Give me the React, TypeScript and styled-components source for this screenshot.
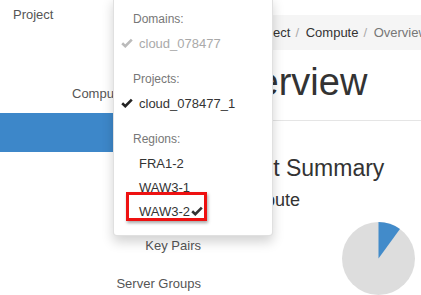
import * as React from 'react';
import styled, { createGlobalStyle } from 'styled-components';

const GlobalStyle = createGlobalStyle`
  html, body {
    margin: 0;
    padding: 0;
    background: #fff;
    overflow: hidden;
  }
  body {
    font-family: "Liberation Sans", Arial, Helvetica, sans-serif;
    color: #333;
  }
`;

const Page = styled.div`
  position: relative;
  display: flex;
  width: 421px;
  height: 295px;
  overflow: hidden;
`;

const Sidebar = styled.nav`
  flex: 0 0 220px;
  display: flex;
  flex-direction: column;
  font-size: 13px;
  color: #555;
`;

const SideTitle = styled.div`
  flex-shrink: 0;
  height: 30px;
  line-height: 30px;
  padding-left: 13px;
`;

const SideGroup = styled.div`
  flex-shrink: 0;
  height: 83px;
  display: flex;
  align-items: flex-end;
  padding: 0 0 12px 72px;
  box-sizing: border-box;
`;

const SideItem = styled.div<{ $active?: boolean }>`
  flex-shrink: 0;
  height: ${(p) => (p.$active ? 39 : 37.5)}px;
  display: flex;
  align-items: center;
  justify-content: flex-end;
  padding-right: 19px;
  background: ${(p) => (p.$active ? '#3d87c9' : 'transparent')};
  color: ${(p) => (p.$active ? '#fff' : '#555')};
`;

const Main = styled.main`
  flex: 1;
  min-width: 0;
  padding: 15px 0 0 15px;
`;

const Breadcrumb = styled.ol`
  margin: 0;
  list-style: none;
  height: 35px;
  display: flex;
  align-items: center;
  padding: 0 15px;
  background: #f5f5f5;
  font-size: 13px;
  white-space: nowrap;
`;

const Crumb = styled.li<{ $current?: boolean }>`
  color: ${(p) => (p.$current ? '#777' : '#333')};
  &:not(:first-child)::before {
    content: '/\\00a0';
    padding: 0 3px 0 5px;
    color: #aaa;
  }
`;

const Heading = styled.h1`
  margin: 7px 0 0 -26px;
  font-size: 38px;
  font-weight: 400;
  line-height: 50px;
  white-space: nowrap;
  padding-bottom: 13px;
  border-bottom: 1px solid #e5e5e5;
`;

const SubHeading = styled.h2`
  margin: 33px 0 0 -4px;
  font-size: 23px;
  font-weight: 400;
  line-height: 28px;
  white-space: nowrap;
`;

const GroupHeading = styled.h3`
  margin: 6px 0 0 -8px;
  font-size: 18px;
  font-weight: 400;
  line-height: 24px;
  white-space: nowrap;
`;

const ChartRow = styled.div`
  display: flex;
  justify-content: flex-end;
  padding: 10px 6px 0 0;
`;

const Menu = styled.div`
  position: absolute;
  left: 113px;
  top: -4px;
  width: 160px;
  padding: 10px 0 12px;
  box-sizing: border-box;
  background: #fff;
  border: 1px solid rgba(0, 0, 0, 0.12);
  border-radius: 4px;
  box-shadow: 0 6px 12px rgba(0, 0, 0, 0.175);
  font-size: 13px;
  z-index: 10;
`;

const MenuHeader = styled.div`
  height: 24px;
  line-height: 24px;
  padding-left: 19px;
  font-size: 12px;
  color: #777;
`;

const MenuItem = styled.div<{ $muted?: boolean }>`
  height: 24px;
  display: flex;
  align-items: center;
  padding-left: 7px;
  color: ${(p) => (p.$muted ? '#aaa' : '#333')};
  white-space: nowrap;
`;

const CheckSlot = styled.span`
  width: 13px;
  display: inline-flex;
  align-items: center;
  justify-content: flex-start;
  margin-right: 5px;
`;

const Divider = styled.div`
  height: 12px;
`;

const Highlight = styled.span`
  position: relative;
  display: inline-flex;
  align-items: center;
  gap: 1px;
  &::after {
    content: '';
    position: absolute;
    left: -13px;
    right: -4px;
    top: -12px;
    bottom: -2px;
    border: 3px solid #ee1111;
    box-shadow: 1px 2px 3px rgba(0, 0, 0, 0.35);
  }
`;

const Check = ({ color }: { color: string }) => (
  <svg width={12} height={10} viewBox="0 0 12 10">
    <path d="M1.2 5.2 L4.3 8.2 L10.8 1.6" stroke={color} strokeWidth={2.6} fill="none" strokeLinejoin="miter" />
  </svg>
);

const Pie = () => {
  const r = 36.5;
  const a = 0.1 * 2 * Math.PI;
  const x = r + r * Math.sin(a);
  const y = r - r * Math.cos(a);
  return (
    <svg width={73} height={73} viewBox="0 0 73 73">
      <circle cx={r} cy={r} r={r} fill="#dddddd" />
      <path d={`M${r} ${r} L${r} 0 A${r} ${r} 0 0 1 ${x} ${y} Z`} fill="#428bca" />
    </svg>
  );
};

const App: React.FC = () => {
  return (
    <>
      <GlobalStyle />
      <Page>
        <Sidebar>
          <SideTitle>Project</SideTitle>
          <SideGroup>Compute</SideGroup>
          <SideItem $active>Overview</SideItem>
          <SideItem>Instances</SideItem>
          <SideItem>Images</SideItem>
          <SideItem>Key Pairs</SideItem>
          <SideItem>Server Groups</SideItem>
        </Sidebar>
        <Main>
          <Breadcrumb>
            <Crumb>Project</Crumb>
            <Crumb>Compute</Crumb>
            <Crumb $current>Overview</Crumb>
          </Breadcrumb>
          <Heading>Overview</Heading>
          <SubHeading>Limit Summary</SubHeading>
          <GroupHeading>Compute</GroupHeading>
          <ChartRow>
            <Pie />
          </ChartRow>
        </Main>

        <Menu>
          <MenuHeader>Domains:</MenuHeader>
          <MenuItem $muted>
            <CheckSlot><Check color="#bbb" /></CheckSlot>
            cloud_078477
          </MenuItem>
          <Divider />
          <MenuHeader>Projects:</MenuHeader>
          <MenuItem>
            <CheckSlot><Check color="#222" /></CheckSlot>
            cloud_078477_1
          </MenuItem>
          <Divider />
          <MenuHeader>Regions:</MenuHeader>
          <MenuItem>
            <CheckSlot />
            FRA1-2
          </MenuItem>
          <MenuItem>
            <CheckSlot />
            WAW3-1
          </MenuItem>
          <MenuItem>
            <CheckSlot />
            <Highlight>
              WAW3-2
              <Check color="#333" />
            </Highlight>
          </MenuItem>
        </Menu>
      </Page>
    </>
  );
};

export default App;
